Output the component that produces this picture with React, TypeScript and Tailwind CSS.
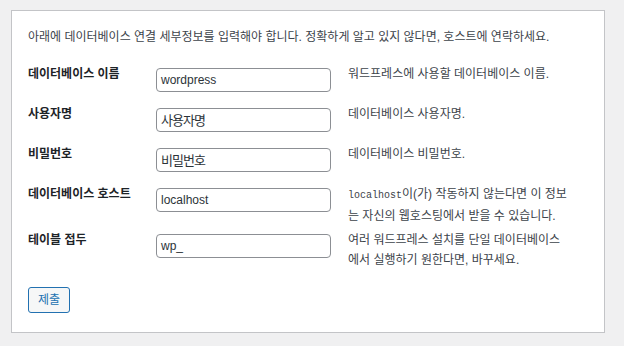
import React from 'react';

const KR = { fontFamily: '"Liberation Sans", "Noto Sans CJK KR", sans-serif' };

interface FieldRow {
  label: string;
  value: string;
  latin: boolean;
  desc: React.ReactNode;
  gap: string;
}

const rows: FieldRow[] = [
  { label: '데이터베이스 이름', value: 'wordpress', latin: true, desc: '워드프레스에 사용할 데이터베이스 이름.', gap: 'mt-[21px]' },
  { label: '사용자명', value: '사용자명', latin: false, desc: '데이터베이스 사용자명.', gap: 'mt-[16px]' },
  { label: '비밀번호', value: '비밀번호', latin: false, desc: '데이터베이스 비밀번호.', gap: 'mt-[16px]' },
  {
    label: '데이터베이스 호스트',
    value: 'localhost',
    latin: true,
    desc: (
      <>
        <code className="font-['Liberation_Mono',monospace] text-[10px]">localhost</code>이(가) 작동하지 않는다면 이 정보
        <br />는 자신의 웹호스팅에서 받을 수 있습니다.
      </>
    ),
    gap: 'mt-[16px]',
  },
  {
    label: '테이블 접두',
    value: 'wp_',
    latin: true,
    desc: (
      <>
        여러 워드프레스 설치를 단일 데이터베이스
        <br />
        에서 실행하기 원한다면, 바꾸세요.
      </>
    ),
    gap: 'mt-[8px]',
  },
];

export default function App() {
  return (
    <div className="w-[624px] h-[346px] bg-[#f0f0f1] pt-[10px] pl-[11px] text-[12px] text-[#3c434a]" style={KR}>
      <div className="w-[594px] bg-white border border-[#c3c4c7] pt-[16px] pb-[19px] px-[16px]">
        <p className="leading-[20px] whitespace-nowrap">
          아래에 데이터베이스 연결 세부정보를 입력해야 합니다. 정확하게 알고 있지 않다면, 호스트에 연락하세요.
        </p>

        {rows.map((r) => (
          <div key={r.label} className={`flex items-start ${r.gap}`}>
            <div className="w-[128px] -mt-[4px] leading-[20px] font-bold text-[#1d2327]">{r.label}</div>
            <div
              className={`w-[175px] h-[24px] border border-[#8c8f94] rounded-[4px] px-[4px] flex items-center text-[#2c3338] leading-none ${
                r.latin ? 'text-[12px]' : 'text-[13px] tracking-[-1px]'
              }`}
            >
              {r.value}
            </div>
            <div className="ml-[17px] -mt-[4px] leading-[20px] whitespace-nowrap">{r.desc}</div>
          </div>
        ))}

        <button className="mt-[17px] w-[42px] h-[26px] border border-[#2271b1] rounded-[3px] bg-[#f6f7f7] text-[#2271b1] text-[12px] leading-none">
          제출
        </button>
      </div>
    </div>
  );
}
